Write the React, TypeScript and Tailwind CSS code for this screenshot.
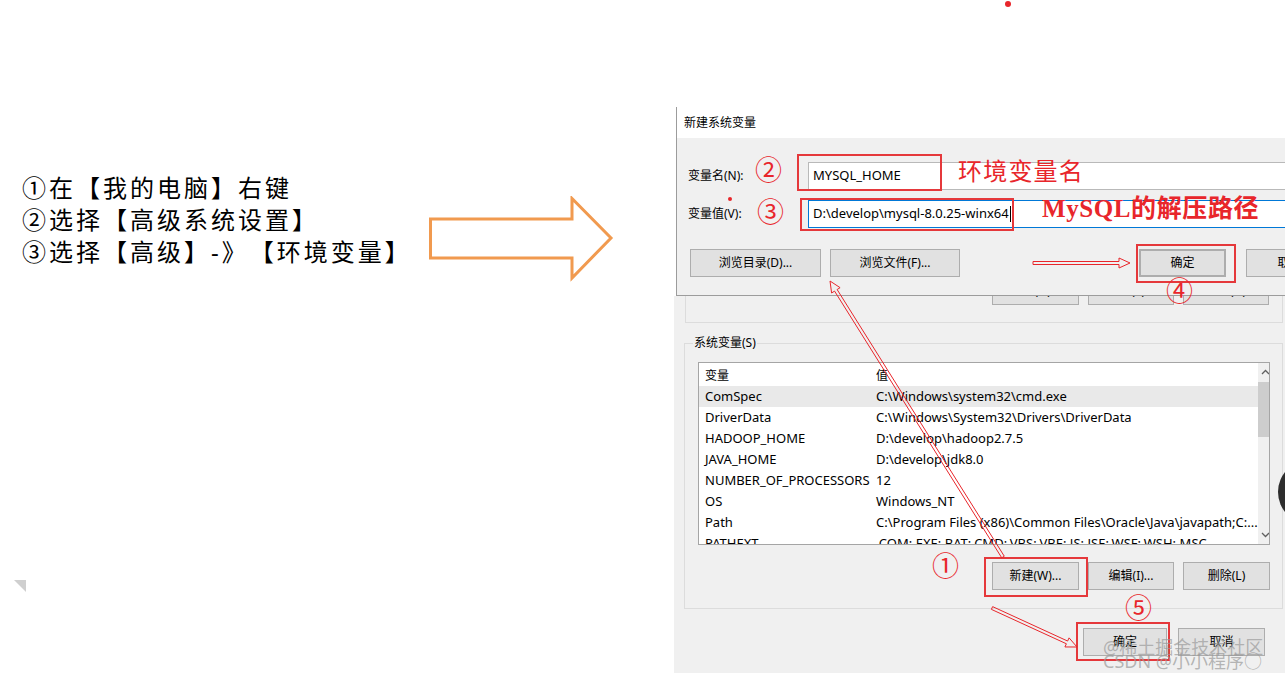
import React from 'react';

const rows: [string, string][] = [
  ['ComSpec', 'C:\\Windows\\system32\\cmd.exe'],
  ['DriverData', 'C:\\Windows\\System32\\Drivers\\DriverData'],
  ['HADOOP_HOME', 'D:\\develop\\hadoop2.7.5'],
  ['JAVA_HOME', 'D:\\develop\\jdk8.0'],
  ['NUMBER_OF_PROCESSORS', '12'],
  ['OS', 'Windows_NT'],
  ['Path', 'C:\\Program Files (x86)\\Common Files\\Oracle\\Java\\javapath;C:...'],
  ['PATHEXT', '.COM;.EXE;.BAT;.CMD;.VBS;.VBE;.JS;.JSE;.WSF;.WSH;.MSC'],
];

function arrowPoints(x1: number, y1: number, x2: number, y2: number, w = 1.5, hl = 11, hw = 5) {
  const dx = x2 - x1;
  const dy = y2 - y1;
  const len = Math.hypot(dx, dy);
  const ux = dx / len;
  const uy = dy / len;
  const px = -uy;
  const py = ux;
  const bx = x2 - ux * hl;
  const by = y2 - uy * hl;
  const pts = [
    [x1 + px * w, y1 + py * w],
    [bx + px * w, by + py * w],
    [bx + px * hw, by + py * hw],
    [x2, y2],
    [bx - px * hw, by - py * hw],
    [bx - px * w, by - py * w],
    [x1 - px * w, y1 - py * w],
  ];
  return pts.map((p) => p.join(',')).join(' ');
}

function WinButton({ label, className = '' }: { label: string; className?: string }) {
  return (
    <div
      className={
        'h-[28px] flex items-center justify-center bg-[#e1e1e1] border border-[#adadad] text-[12px] text-black shrink-0 ' +
        className
      }
    >
      {label}
    </div>
  );
}

function Chevron({ up }: { up?: boolean }) {
  return (
    <svg width="9" height="6" viewBox="0 0 9 6">
      <path d={up ? 'M1 5 L4.5 1.5 L8 5' : 'M1 1 L4.5 4.5 L8 1'} fill="none" stroke="#606060" strokeWidth="1.3" />
    </svg>
  );
}

export default function App() {
  const red = '#e5383b';
  return (
    <div className="w-[1285px] h-[683px] bg-white relative overflow-hidden flex font-['Noto_Sans','Noto_Sans_CJK_SC',sans-serif]">
      {/* left steps */}
      <div className="pl-[22px] pt-[172px] w-[429px] shrink-0 text-[24px] leading-[32px] tracking-[3px] text-black whitespace-nowrap">
        <p>①在【我的电脑】右键</p>
        <p>②选择【高级系统设置】</p>
        <p>
          ③选择【高级】-》<span className="ml-[13px]">【环境变量】</span>
        </p>
      </div>

      {/* orange arrow */}
      <div className="pt-[196px] shrink-0">
        <svg width="186" height="86" viewBox="0 0 186 86">
          <polygon
            points="1.5,23 143,23 143,2.5 182,42 143,82 143,62 1.5,62"
            fill="none"
            stroke="#f19a4f"
            strokeWidth="3"
            strokeLinejoin="miter"
          />
        </svg>
      </div>

      {/* dialogs screenshot */}
      <div className="ml-auto w-[611px] pt-[107px] flex flex-col text-black">
        {/* new system variable dialog */}
        <div className="ml-[2px] h-[189px] flex flex-col border-l border-b border-[#9c9c9c]">
          <div className="h-[31px] bg-white pl-[7px] flex items-center text-[12px]">新建系统变量</div>
          <div className="flex-1 bg-[#f0f0f0] pl-[11px] pt-[24px]">
            <div className="flex items-center h-[28px]">
              <span className="w-[120px] text-[12px]">变量名(N):</span>
              <div className="flex-1 h-[28px] bg-white border border-r-0 border-[#b9b9b9] pl-[4px] flex items-center text-[13px]">
                MYSQL_HOME
              </div>
            </div>
            <div className="flex items-center h-[28px] mt-[10px]">
              <span className="w-[120px] text-[12px]">变量值(V):</span>
              <div className="flex-1 h-[28px] bg-white border border-r-0 border-[#0078d7] pl-[4px] flex items-center text-[13px]">
                D:\develop\mysql-8.0.25-winx64
                <span className="w-px h-[16px] bg-black ml-[1px]" />
              </div>
            </div>
            <div className="flex mt-[21px]">
              <WinButton label="浏览目录(D)..." className="ml-[2px] w-[131px]" />
              <WinButton label="浏览文件(F)..." className="ml-[9px] w-[130px]" />
              <WinButton label="确定" className="ml-[179px] w-[87px] border-2 border-[#0078d7]" />
              <WinButton label="取消" className="ml-[20px] w-[87px]" />
            </div>
          </div>
        </div>

        {/* environment variables dialog behind */}
        <div className="h-[377px] bg-[#f0f0f0] flex flex-col">
          <div className="ml-[11px] mr-[2px] h-[27px] border-l border-r border-b border-[#dcdcdc]">
            <div className="h-[9px] overflow-hidden flex items-end pl-[306px] gap-[9px]">
              <WinButton label="新建(N)..." className="w-[87px]" />
              <WinButton label="编辑(E)..." className="w-[86px]" />
              <WinButton label="删除(D)" className="w-[86px]" />
            </div>
          </div>

          <div className="relative ml-[10px] mr-[2px] mt-[20px] h-[266px] border border-[#dcdcdc] flex flex-col">
            <span className="absolute -top-[9px] left-[8px] bg-[#f0f0f0] px-[1px] text-[12px] leading-[16px]">
              系统变量(S)
            </span>
            <div className="mt-[18px] ml-[13px] w-[572px] h-[183px] border border-[#a5a5a5] bg-white flex overflow-hidden">
              <div className="flex-1 flex flex-col text-[13px] leading-[21px] pt-[2px]">
                <div className="flex h-[22px] items-center text-[12px]">
                  <span className="w-[177px] pl-[6px]">变量</span>
                  <span>值</span>
                </div>
                {rows.map(([k, v], i) => (
                  <div
                    key={k}
                    className={'flex h-[21px] items-center shrink-0 whitespace-nowrap ' + (i === 0 ? 'bg-[#e9e9e9]' : '')}
                  >
                    <span className="w-[177px] pl-[6px] shrink-0">{k}</span>
                    <span>{v}</span>
                  </div>
                ))}
              </div>
              <div className="w-[17px] bg-[#f0f0f0] flex flex-col items-center">
                <div className="h-[18px] flex items-center">
                  <Chevron up />
                </div>
                <div className="w-[15px] h-[55px] bg-[#cdcdcd] mt-[1px]" />
                <div className="flex-1" />
                <div className="h-[18px] flex items-center">
                  <Chevron />
                </div>
              </div>
            </div>
            <div className="flex justify-end gap-[9px] pr-[12px] mt-[17px]">
              <WinButton label="新建(W)..." className="w-[87px]" />
              <WinButton label="编辑(I)..." className="w-[86px]" />
              <WinButton label="删除(L)" className="w-[87px]" />
            </div>
          </div>

          <div className="flex justify-end pr-[20px] mt-[19px] gap-[11px]">
            <WinButton label="确定" className="w-[84px]" />
            <WinButton label="取消" className="w-[87px]" />
          </div>
        </div>
      </div>

      {/* slide corner mark */}
      <svg className="absolute left-[14px] top-[580px]" width="13" height="13" viewBox="0 0 13 13">
        <polygon points="0,0 12,0 12,12" fill="#cfcfcf" />
      </svg>

      {/* annotation overlay */}
      <svg className="absolute left-0 top-0 pointer-events-none" width="1285" height="683" viewBox="0 0 1285 683">
        <circle cx="1008" cy="4" r="3" fill="#e8262b" />
        <circle cx="730" cy="199" r="2" fill="#e8262b" />
        <circle cx="1310" cy="492" r="32" fill="#2d2d2d" />
        <g fill="none" stroke={red} strokeWidth="2">
          <rect x="798" y="155" width="143" height="35" />
          <rect x="801" y="199" width="212" height="31" />
          <rect x="1137" y="245" width="98" height="37" />
          <rect x="985" y="558" width="102" height="38" />
          <rect x="1077" y="623" width="92" height="37" />
        </g>
        <g fill="white" fillOpacity="0" stroke="#e8262b" strokeWidth="1">
          <polygon points={arrowPoints(1003, 557, 830, 281)} />
          <polygon points={arrowPoints(1033, 263, 1130, 263)} />
          <polygon points={arrowPoints(992, 608, 1077, 647)} />
        </g>
      </svg>

      {/* red annotation text */}
      <span className="absolute left-[755px] top-[154px] text-[27px] leading-[32px] text-[#e8262b]">②</span>
      <span className="absolute left-[757px] top-[196px] text-[27px] leading-[32px] text-[#e8262b]">③</span>
      <span className="absolute left-[1166px] top-[275px] text-[27px] leading-[32px] text-[#e8262b]">④</span>
      <span className="absolute left-[932px] top-[550px] text-[27px] leading-[32px] text-[#e8262b]">①</span>
      <span className="absolute left-[1125px] top-[592px] text-[27px] leading-[32px] text-[#e8262b]">⑤</span>
      <span className="absolute left-[958px] top-[156px] text-[24px] leading-[30px] tracking-[1.2px] text-[#e8262b]">
        环境变量名
      </span>
      <span className="absolute left-[1042px] top-[193px] text-[25px] leading-[32px] tracking-[0.6px] text-[#e8262b] font-bold font-['Liberation_Serif','Noto_Sans_CJK_SC',serif]">
        MySQL的解压路径
      </span>

      {/* watermark */}
      <div className="absolute left-[1103px] top-[640px] flex flex-col text-[18px] leading-[14px] text-[#9a9a9a]/70 whitespace-nowrap">
        <span>@稀土掘金技术社区</span>
        <span>CSDN @小小程序○</span>
      </div>
    </div>
  );
}
